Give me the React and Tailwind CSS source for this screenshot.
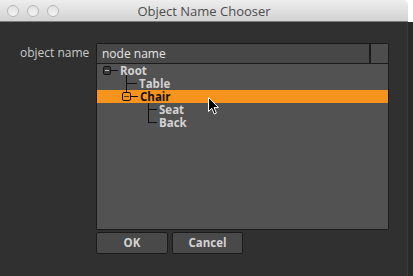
import React from "react";

const rows = [
  { label: "Root", pl: "pl-[23px]", hl: false },
  { label: "Table", pl: "pl-[42px]", hl: false },
  { label: "Chair", pl: "pl-[43px]", hl: true },
  { label: "Seat", pl: "pl-[62px]", hl: false },
  { label: "Back", pl: "pl-[62px]", hl: false },
];

function TrafficLight() {
  return (
    <div className="w-[12px] h-[12px] rounded-full border border-[#b5b5b5] bg-gradient-to-b from-[#e2e2e2] to-[#f4f4f4]" />
  );
}

export default function App() {
  return (
    <div
      className="w-[413px] h-[276px] flex bg-white overflow-hidden"
      style={{ fontFamily: '"Open Sans", "DejaVu Sans", sans-serif' }}
    >
      <div className="w-[408px] flex flex-col">
        {/* Title bar */}
        <div className="h-[22px] shrink-0 rounded-tr-[5px] bg-gradient-to-b from-[#eeeeee] to-[#d2d2d2] border-b border-[#7a7a7a] relative flex items-center">
          <div className="flex gap-[8px] pl-[7px]">
            <TrafficLight />
            <TrafficLight />
            <TrafficLight />
          </div>
          <div className="absolute inset-0 flex items-center justify-center text-[13px] text-[#4d4d4d] leading-none pt-[1px]">
            Object Name Chooser
          </div>
        </div>
        {/* Body */}
        <div className="flex-1 bg-[#303030] border-r border-[#3b3b3b] pt-[21px] pl-[20px] relative">
          <div className="flex">
            <div className="w-[76px] text-[12px] text-[#c9c9c9] leading-none pt-[4px]">
              object name
            </div>
            <div className="flex flex-col">
              <div className="w-[293px] border border-[#1b1b1b] rounded-[2px] flex flex-col">
                <div className="h-[20px] flex border-b border-[#1b1b1b]">
                  <div className="flex-1 bg-[#474747] text-[12px] text-[#e4e4e4] pl-[5px] flex items-center leading-none">
                    node name
                  </div>
                  <div className="w-[19px] bg-[#4d4d4d] border-l-2 border-[#1b1b1b]" />
                </div>
                <div className="h-[165px] bg-[#525252] relative">
                  {rows.map((r) => (
                    <div
                      key={r.label}
                      className={`h-[13px] flex items-center ${r.pl} text-[11.5px] font-bold leading-none ${
                        r.hl ? "bg-[#f7941d] text-[#111111]" : "text-[#d2d2d2]"
                      }`}
                    >
                      {r.label}
                    </div>
                  ))}
                  <svg
                    className="absolute left-0 top-0"
                    width="80"
                    height="70"
                    viewBox="0 0 80 70"
                  >
                    {/* Root box */}
                    <rect x="6.5" y="2.5" width="7" height="8" rx="1.5" fill="#3a3a3a" stroke="#111" />
                    <line x1="8" y1="6.5" x2="12" y2="6.5" stroke="#bdbdbd" />
                    <line x1="14" y1="6.5" x2="21" y2="6.5" stroke="#111" />
                    {/* Root trunk */}
                    <line x1="29.5" y1="11" x2="29.5" y2="28" stroke="#111" />
                    <line x1="29.5" y1="19.5" x2="40" y2="19.5" stroke="#111" />
                    {/* Chair box */}
                    <rect x="25.5" y="28.5" width="8" height="8" rx="1.5" fill="#f7941d" stroke="#111" />
                    <line x1="27" y1="32.5" x2="32" y2="32.5" stroke="#5a3a10" />
                    <line x1="34" y1="32.5" x2="41" y2="32.5" stroke="#111" />
                    {/* Chair trunk */}
                    <line x1="51.5" y1="39" x2="51.5" y2="59" stroke="#111" />
                    <line x1="51.5" y1="45.5" x2="60" y2="45.5" stroke="#111" />
                    <line x1="51.5" y1="58.5" x2="60" y2="58.5" stroke="#111" />
                  </svg>
                </div>
              </div>
              <div className="flex gap-[4px] mt-[2px]">
                <button className="w-[72px] h-[22px] bg-[#494949] border border-[#1b1b1b] rounded-[2px] text-[11.5px] font-bold text-[#d2d2d2] leading-none">
                  OK
                </button>
                <button className="w-[71px] h-[22px] bg-[#494949] border border-[#1b1b1b] rounded-[2px] text-[11.5px] font-bold text-[#d2d2d2] leading-none">
                  Cancel
                </button>
              </div>
            </div>
          </div>
          {/* Mouse cursor */}
          <svg
            className="absolute left-[207px] top-[74px]"
            width="14"
            height="20"
            viewBox="0 0 14 20"
          >
            <path
              d="M1.5 1.5 L1.5 15.5 L4.8 12.3 L7.3 18 L9.4 17.1 L7 11.6 L11.5 11.6 Z"
              fill="#000"
              stroke="#fff"
              strokeWidth="1"
              strokeLinejoin="round"
            />
          </svg>
        </div>
      </div>
      <div className="w-[5px] flex flex-col">
        <div className="h-[22px] bg-white" />
        <div className="flex-1 bg-[#2a2a2a]" />
      </div>
    </div>
  );
}
